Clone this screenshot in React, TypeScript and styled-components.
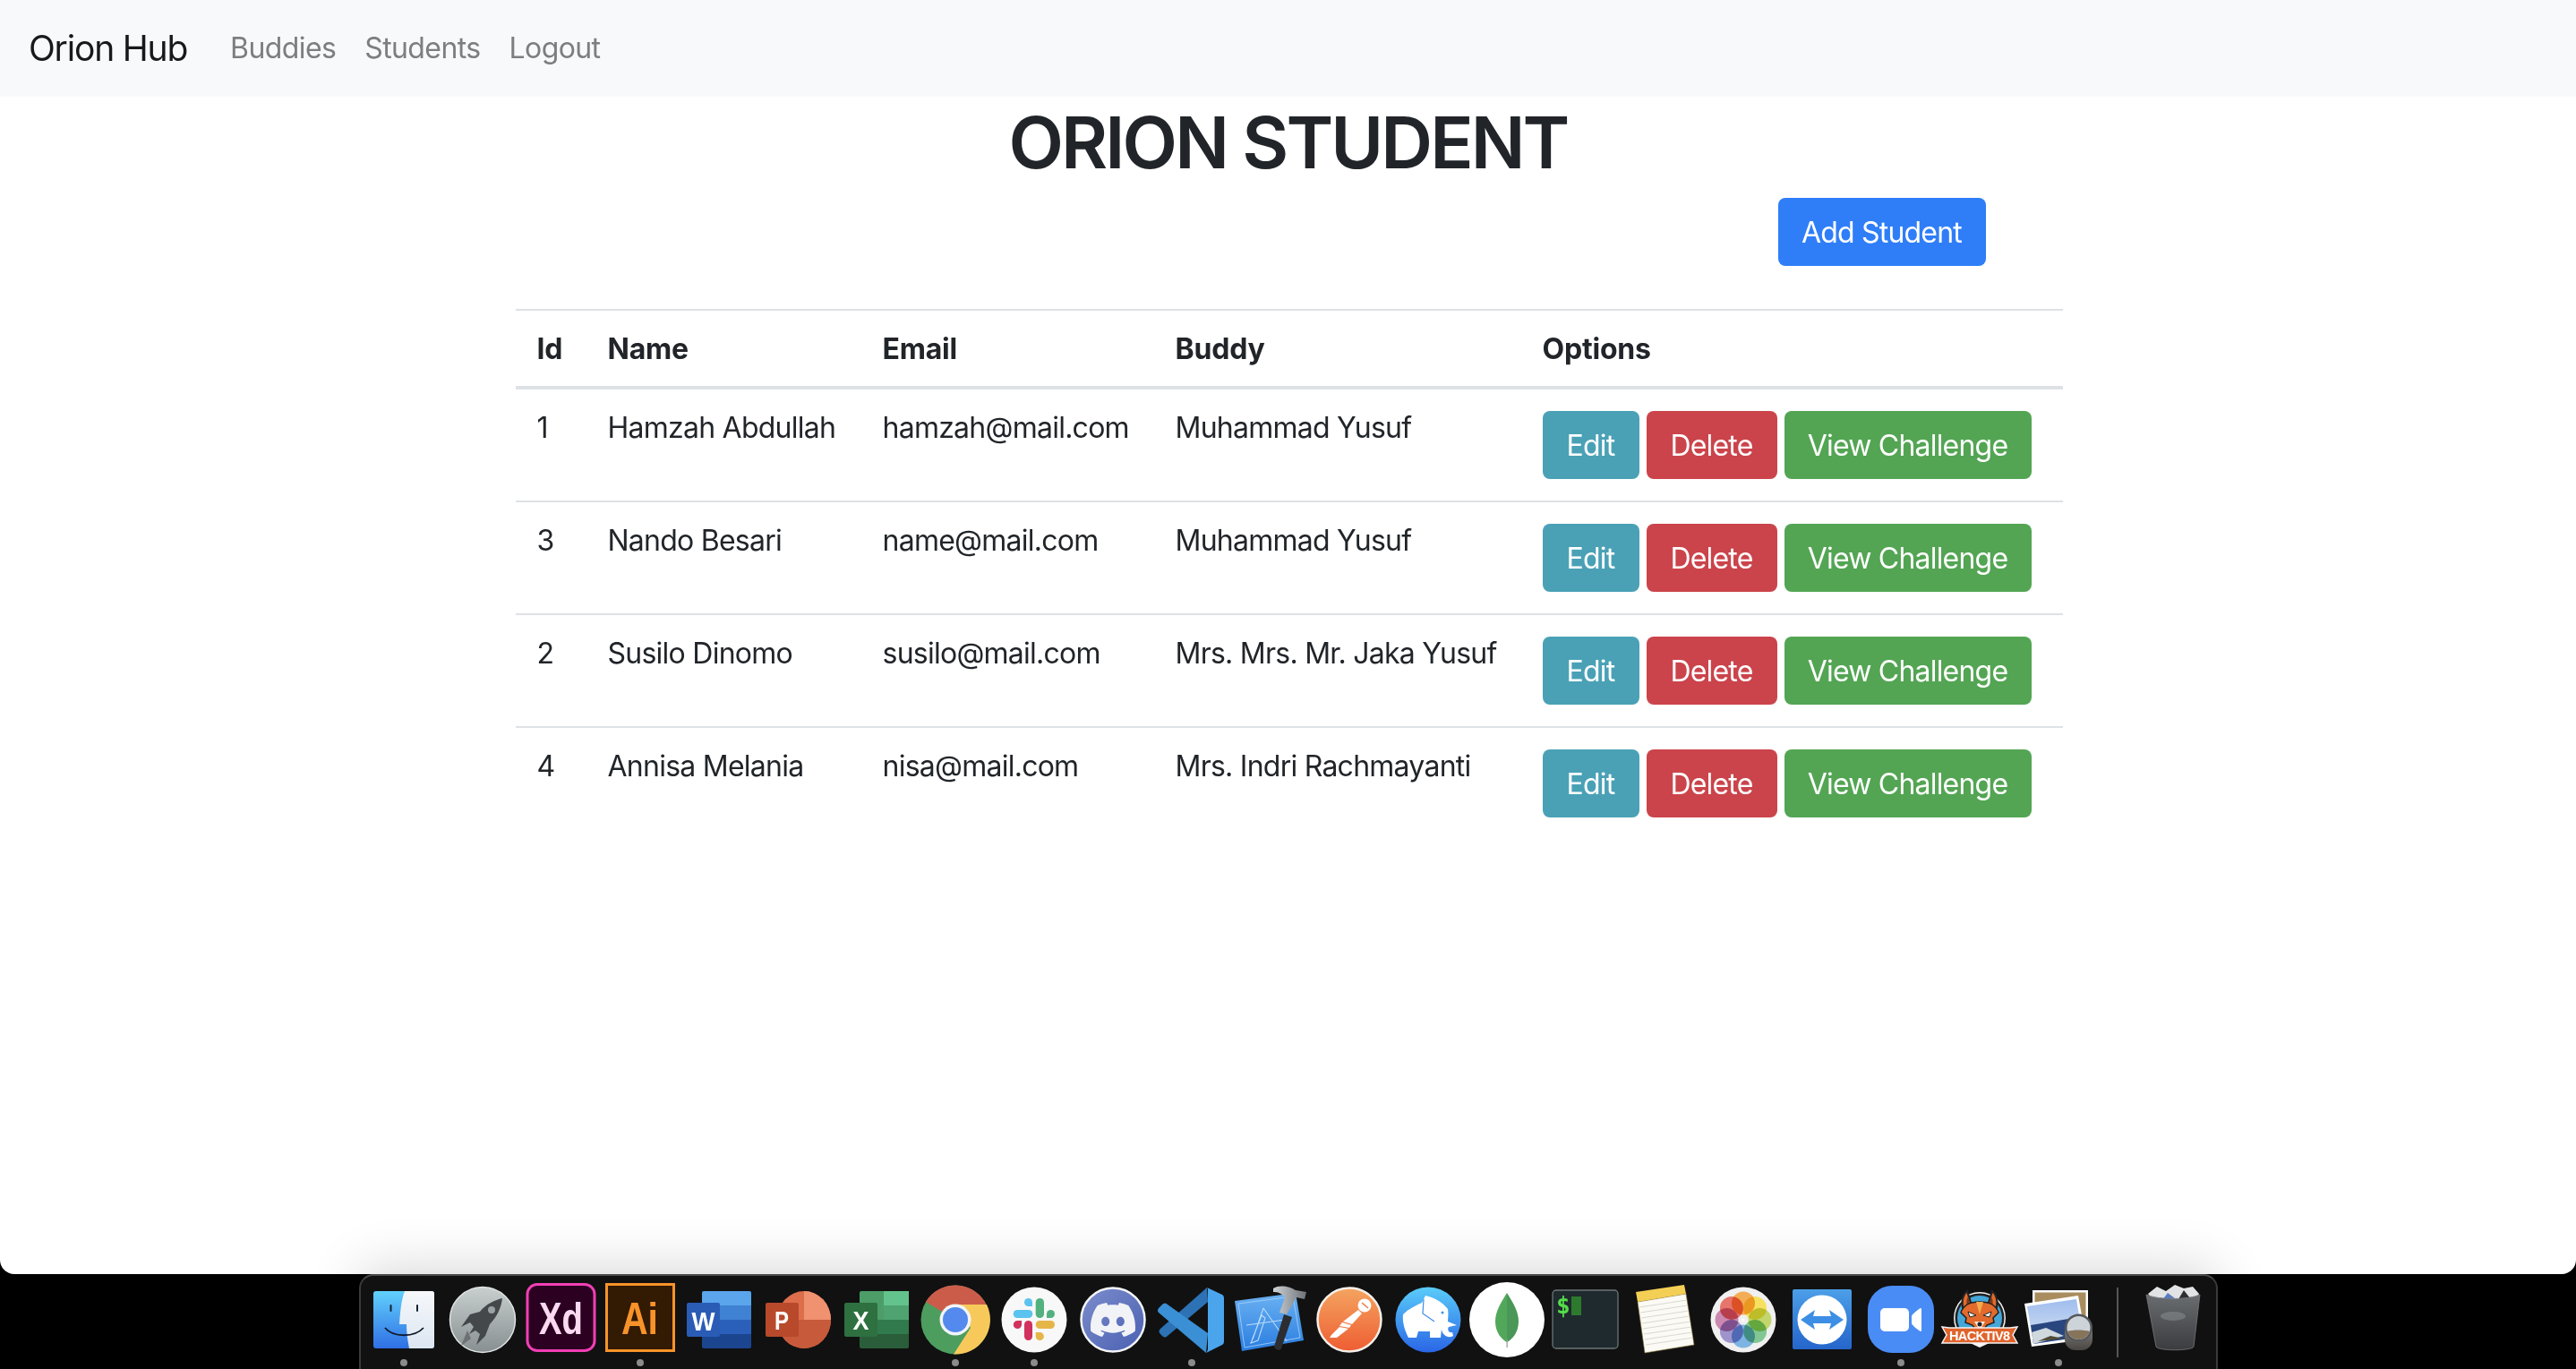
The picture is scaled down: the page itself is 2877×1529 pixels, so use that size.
import React from "react";
import styled, { createGlobalStyle } from "styled-components";
import { SiDiscord } from "react-icons/si";

const GlobalStyle = createGlobalStyle`
  html, body {
    margin: 0;
    height: 1529px;
    overflow: hidden;
    background: #000;
    font-family: Inter, "Liberation Sans", sans-serif;
    color: #212529;
  }
  * { box-sizing: border-box; }
`;

const Screen = styled.div`
  display: flex;
  flex-direction: column;
  align-items: center;
  height: 1529px;
`;

const Page = styled.div`
  width: 100%;
  height: 1423px;
  background: #fff;
  border-radius: 0 0 16px 16px;
`;

const Navbar = styled.nav`
  display: flex;
  align-items: center;
  height: 108px;
  padding: 0 32px;
  background: #f8f9fa;
`;

const Brand = styled.a`
  font-size: 39px;
  line-height: 60px;
  letter-spacing: -1.2px;
  color: #18191a;
  margin-right: 32px;
`;

const NavLink = styled.a`
  font-size: 32px;
  line-height: 48px;
  padding: 0 16px;
  letter-spacing: -0.6px;
  color: #7d7e7f;
`;

const Title = styled.h1`
  margin: 3px 0 0;
  text-align: center;
  font-size: 80px;
  line-height: 96px;
  font-weight: 560;
  letter-spacing: -2.9px;
`;

const Content = styled.div`
  width: 1730px;
  margin: 0 auto;
  padding-left: 2px;
`;

const AddRow = styled.div`
  display: flex;
  justify-content: flex-end;
  margin-top: 14px;
  padding-right: 86px;
`;

const Button = styled.button<{ $bg: string; $w: number }>`
  width: ${(p) => p.$w}px;
  height: 76px;
  padding: 0;
  border: 0;
  border-radius: 8px;
  background: ${(p) => p.$bg};
  color: #fff;
  font-family: inherit;
  font-size: 32px;
  letter-spacing: -0.8px;
  white-space: nowrap;
  flex: none;
`;

const Table = styled.table`
  width: 100%;
  margin-top: 48px;
  border-collapse: collapse;
  table-layout: fixed;
`;

const Col = styled.col<{ $w: number }>`
  width: ${(p) => p.$w}px;
`;

const Th = styled.th`
  padding: 25px 24px 23px;
  text-align: left;
  font-size: 32px;
  line-height: 36px;
  font-weight: 700;
  letter-spacing: -0.2px;
  border-top: 2px solid #dee2e6;
  border-bottom: 4px solid #dee2e6;
`;

const Td = styled.td`
  padding: 25px 24px 23px;
  vertical-align: top;
  font-size: 32px;
  line-height: 36px;
  letter-spacing: -0.75px;
  white-space: nowrap;
`;

const ActionCell = styled(Td)`
  padding: 24px;
`;

const Row = styled.tr`
  & + & {
    border-top: 2px solid #dee2e6;
  }
`;

const Actions = styled.div`
  display: flex;
  gap: 8px;
`;

const Dock = styled.div`
  position: relative;
  display: flex;
  width: 2076px;
  height: 106px;
  padding: 5px 4px 0;
  background: #111;
  border: 2px solid #3a3a3a;
  border-bottom: 0;
  border-top-color: #4a4a4a;
  border-radius: 16px 16px 0 0;
  box-shadow: 0 -6px 60px rgba(0, 0, 0, 0.16);
`;

const Slot = styled.div`
  width: 88px;
  height: 100px;
  display: flex;
  flex-direction: column;
  align-items: center;
  flex: none;
`;

const Glyph = styled.svg`
  display: block;
  width: 88px;
  height: 88px;
  flex: none;
`;

const Dot = styled.span<{ $on: boolean }>`
  width: 8px;
  height: 8px;
  border-radius: 50%;
  background: ${(p) => (p.$on ? "#8b8b8b" : "transparent")};
`;

const Divider = styled.div`
  width: 2px;
  height: 78px;
  margin: 8px 17px 0 21px;
  background: #555;
  flex: none;
`;

const Petal = styled.circle`
  mix-blend-mode: multiply;
`;

const IconText = styled.text<{ $family?: string }>`
  font-family: ${(p) => p.$family || '"Liberation Sans", sans-serif'};
`;

const students = [
  { id: 1, name: "Hamzah Abdullah", email: "hamzah@mail.com", buddy: "Muhammad Yusuf" },
  { id: 3, name: "Nando Besari", email: "name@mail.com", buddy: "Muhammad Yusuf" },
  { id: 2, name: "Susilo Dinomo", email: "susilo@mail.com", buddy: "Mrs. Mrs. Mr. Jaka Yusuf" },
  { id: 4, name: "Annisa Melania", email: "nisa@mail.com", buddy: "Mrs. Indri Rachmayanti" },
];

const Gradient = ({ id, from, to }: { id: string; from: string; to: string }) => (
  <linearGradient id={id} x1="0" y1="0" x2="0" y2="1">
    <stop offset="0" stopColor={from} />
    <stop offset="1" stopColor={to} />
  </linearGradient>
);

const Finder = () => (
  <>
    <defs>
      <Gradient id="fl" from="#62d0fc" to="#2f6fe4" />
      <Gradient id="fr" from="#f6f8fa" to="#dce6f2" />
    </defs>
    <rect x="10" y="12" width="68" height="64" rx="3" fill="url(#fl)" />
    <path d="M45 12H75a3 3 0 0 1 3 3V73a3 3 0 0 1-3 3H50C48 66 47 58 47 49H39C40 36 41 22 45 12Z" fill="url(#fr)" />
    <rect x="28.5" y="27" width="2" height="8" rx="1" fill="#123" />
    <rect x="58" y="27" width="2" height="8" rx="1" fill="#123" />
    <path d="M23 53C32 64 56 64 66 53" fill="none" stroke="#111a2a" strokeWidth="1.8" />
  </>
);

const Launchpad = () => (
  <>
    <defs>
      <Gradient id="lp" from="#c9cfcf" to="#878f90" />
    </defs>
    <circle cx="44" cy="44" r="36.5" fill="url(#lp)" stroke="#dfe4e4" strokeWidth="1.5" />
    <path d="M66 20C58 22 48 26 41 35L30 38L20 52L30 47L34 52L29 60L36 56L41 60L37 72L47 62L52 49C60 41 65 30 66 20Z" fill="#45484a" />
    <circle cx="54" cy="33" r="4" fill="#9ba2a3" />
    <path d="M27 56L20 73L31 65Z" fill="#6d7173" />
  </>
);

const Xd = () => (
  <>
    <rect x="6" y="4.5" width="75" height="74" rx="11" fill="#2b0021" stroke="#f23fb5" strokeWidth="3" />
    <IconText x="19" y="60" fontSize="50" fontWeight="700" textLength="49" lengthAdjust="spacingAndGlyphs" fill="#fbd9f1">Xd</IconText>
  </>
);

const Ai = () => (
  <>
    <rect x="6.5" y="4.5" width="75" height="74" fill="#331a02" stroke="#f7932a" strokeWidth="3" />
    <IconText x="23" y="60" fontSize="50" fontWeight="700" textLength="41" lengthAdjust="spacingAndGlyphs" fill="#f7932a">Ai</IconText>
  </>
);

const OfficeBack = ({ c }: { c: string[] }) => (
  <>
    <path d="M27 12H78a2 2 0 0 1 2 2V28H25V14a2 2 0 0 1 2-2Z" fill={c[0]} />
    <rect x="25" y="28" width="55" height="16" fill={c[1]} />
    <rect x="25" y="44" width="55" height="16" fill={c[2]} />
    <path d="M25 60H80V74a2 2 0 0 1-2 2H27a2 2 0 0 1-2-2Z" fill={c[3]} />
  </>
);

const Word = () => (
  <>
    <OfficeBack c={["#5aa5ec", "#3f81d2", "#2a60ba", "#1c4590"]} />
    <rect x="8" y="25" width="37" height="38" rx="2" fill="#2a5cb6" />
    <IconText x="13.5" y="55.5" fontSize="30" fontWeight="700" textLength="26" lengthAdjust="spacingAndGlyphs" fill="#fff">W</IconText>
  </>
);

const Powerpoint = () => (
  <>
    <ellipse cx="51" cy="44" rx="30" ry="32" fill="#dd6e4c" />
    <path d="M51 12A30 32 0 0 1 81 44H51Z" fill="#f0916f" />
    <path d="M81 44A30 32 0 0 1 21 44Z" fill="#c65a3a" />
    <rect x="8" y="25" width="37" height="38" rx="2" fill="#b84a2b" />
    <IconText x="18" y="55" fontSize="29" fontWeight="700" textLength="16" lengthAdjust="spacingAndGlyphs" fill="#fff">P</IconText>
  </>
);

const Excel = () => (
  <>
    <OfficeBack c={["#4c9d68", "#4c9d68", "#307a4d", "#2a5d3a"]} />
    <rect x="52" y="12" width="28" height="16" fill="#63c38c" />
    <rect x="52" y="28" width="28" height="16" fill="#4fa370" />
    <rect x="8" y="25" width="37" height="38" rx="2" fill="#2f7040" />
    <IconText x="17.5" y="55" fontSize="29" fontWeight="700" textLength="18" lengthAdjust="spacingAndGlyphs" fill="#fff">X</IconText>
  </>
);

const Chrome = () => (
  <>
    <circle cx="44" cy="44" r="38.5" fill="#4d9d5f" />
    <path d="M44 44L11 24A38.5 38.5 0 0 1 79 28H44Z" fill="#cc5c4a" />
    <path d="M44 27H79A38.5 38.5 0 0 1 42 82.4L61 53Z" fill="#f7c95b" />
    <circle cx="44" cy="44" r="17.5" fill="#f2f5f8" />
    <circle cx="44" cy="44" r="14" fill="#5489ee" />
  </>
);

const Slack = () => (
  <>
    <circle cx="44" cy="44" r="36.5" fill="#f8f8f8" />
    <g fill="#5bc3ef">
      <rect x="20.7" y="33" width="21.6" height="9" rx="4.5" />
      <path d="M33 24.5a4.5 4.5 0 0 1 9 0V29H37.5a4.5 4.5 0 0 1-4.5-4.5Z" />
    </g>
    <g fill="#52b27f">
      <rect x="45.7" y="20" width="9.3" height="22" rx="4.6" />
      <path d="M58 37.5a4.5 4.5 0 1 1 4.5 4.5H58Z" />
    </g>
    <g fill="#e5b548">
      <rect x="45.7" y="45" width="21.3" height="9" rx="4.5" />
      <path d="M45.7 58H50.4a4.6 4.5 0 1 1-4.7 4.5Z" />
    </g>
    <g fill="#d1315c">
      <rect x="33" y="45" width="9" height="22" rx="4.5" />
      <path d="M30 49.5a4.6 4.5 0 1 1-4.6-4.5H30Z" />
    </g>
  </>
);

const Discord = () => (
  <>
    <defs>
      <linearGradient id="dc" x1="0" y1="0" x2="1" y2="1">
        <stop offset="0" stopColor="#7c8dcc" />
        <stop offset="1" stopColor="#4a60b2" />
      </linearGradient>
    </defs>
    <circle cx="44" cy="44" r="35.5" fill="url(#dc)" stroke="#f4f5f8" strokeWidth="2.5" />
    <SiDiscord x="19" y="19" size={50} color="#f2f3f7" />
  </>
);

const VSCode = () => (
  <>
    <path d="M61 8L62 24L17 62C15 64 13 64 11 62L9 60C7 58 7 56 9 54Z" fill="#2c72b4" />
    <path d="M7 36C5 34 6 32 8 30L11 27C13 25 15 25 17 27L62 59L60 81Z" fill="#3a8fd5" />
    <path d="M61 8L78 16C79.5 17 80 18 80 20V68C80 70 79.5 71 78 72L60 81C61 80 62 78 62 76V12C62 10 62 9 61 8Z" fill="#4aa5ec" />
  </>
);

const Xcode = () => (
  <>
    <defs>
      <linearGradient id="xc" x1="0" y1="0" x2="0" y2="1">
        <stop offset="0" stopColor="#6bb2f2" />
        <stop offset="1" stopColor="#2a7de0" />
      </linearGradient>
      <linearGradient id="xh" x1="0" y1="0" x2="1" y2="0">
        <stop offset="0" stopColor="#cfd3d6" />
        <stop offset="1" stopColor="#6e7276" />
      </linearGradient>
    </defs>
    <path d="M4 23L72 14L81 67L12 79Z" fill="url(#xc)" />
    <path d="M8 26L69 18L77 64L15 75Z" fill="none" stroke="#a9d3fa" strokeWidth="0.8" />
    <g fill="none" stroke="#bcdcfb" strokeWidth="1.1">
      <path d="M36 31L62 68M36 31L24 66M17 50L60 44M30 67L38 42L34 39L22 70Z" />
    </g>
    <path d="M47 9C54 4 66 7 72 11L84 13L82 21L73 19L71 22L62 38L54 36L60 19C56 14 52 13 47 13Z" fill="url(#xh)" />
    <path d="M59 38L68 41L56 76C55 79 49 78 48 74Z" fill="#2b2d30" />
  </>
);

const Postman = () => (
  <>
    <defs>
      <Gradient id="pm" from="#f4a460" to="#ee5d33" />
    </defs>
    <circle cx="44" cy="44" r="35.5" fill="url(#pm)" stroke="#f5efe9" strokeWidth="2.5" />
    <circle cx="61" cy="28" r="7.5" fill="#fff" />
    <path d="M58 25L65 31" stroke="#ee7b46" strokeWidth="1.5" />
    <path d="M54 33L58 37L47 49L37 46Z" fill="#fff" />
    <path d="M36 47L46 50L44 53L33 51Z" fill="#fff" />
    <path d="M33 52L43 54L30 64H22L24 61Z" fill="#fff" />
  </>
);

const Elephant = () => (
  <>
    <defs>
      <Gradient id="el" from="#5accf9" to="#2a66e6" />
    </defs>
    <circle cx="44" cy="44" r="36.5" fill="url(#el)" />
    <path d="M16 38C22 32 30 28 37 25L41 17C50 19 60 24 66 32C67 38 66 42 66 46L76 50L67 52C65 55 67 59 71 58L72 62C66 66 59 60 59 54L58 64H46V57H33L31 64H22C18 56 15 47 16 38Z" fill="#fff" />
    <path d="M39 21L38 37L51 46" fill="none" stroke="#3f8fe9" strokeWidth="1.2" />
    <circle cx="60" cy="36" r="1.5" fill="#3a94ea" />
  </>
);

const Mongo = () => (
  <>
    <circle cx="44" cy="44" r="42" fill="#fff" />
    <path d="M44 14C38 24 31 34 31 46C31 58 38 66 44 69Z" fill="#52a85a" />
    <path d="M44 14C50 24 57 34 57 46C57 58 50 66 44 69Z" fill="#4a9758" />
    <rect x="43.5" y="66" width="1.3" height="9" fill="#9aa39b" />
  </>
);

const Terminal = () => (
  <>
    <rect x="7" y="11" width="73" height="65" rx="4" fill="#1f2a2e" stroke="#6d7578" strokeWidth="1.3" />
    <IconText $family='"DejaVu Sans Mono", monospace' x="11" y="37" fontSize="26" fontWeight="700" fill="#54dd4a">$</IconText>
    <rect x="28" y="18" width="11" height="21" fill="#2d7a2e" />
  </>
);

const Notes = () => (
  <>
    <path d="M14 24L68 15L77 72L22 81Z" fill="#fbfaf4" stroke="#8d7a3c" strokeWidth="0.6" />
    <path d="M12 13L66 5L68 15L14 24Z" fill="#f4cf55" />
    <g stroke="#cfcfcb" strokeWidth="0.8">
      <path d="M16 30L69 22M17 36L70 28M18 42L71 34M19 48L72 40M20 54L73 46M21 60L74 52M22 66L75 58M23 72L76 64" />
    </g>
  </>
);

const Photos = () => (
  <>
    <circle cx="44" cy="44" r="36.5" fill="#f0f0f0" />
    <g style={{ isolation: "isolate" }}>
      {["#f3ad55", "#f7e05f", "#c3d66c", "#82c793", "#7db4e3", "#a094cc", "#cb89b2", "#e6756c"].map((c, i) => (
        <Petal key={c} cx="44" cy="25.5" r="13" fill={c} transform={`rotate(${i * 45} 44 44)`} />
      ))}
    </g>
    <circle cx="44" cy="44" r="1.5" fill="#fff" />
  </>
);

const TeamViewer = () => (
  <>
    <defs>
      <Gradient id="tv" from="#4c9fe8" to="#2565cb" />
    </defs>
    <rect x="11" y="10" width="66" height="67" rx="2" fill="url(#tv)" />
    <circle cx="44" cy="44" r="27.5" fill="#fff" />
    <path d="M20 44L36 33L34 40H54L52 33L68 44L52 55L54 48H34L36 55Z" fill="#3c8fe4" />
  </>
);

const Zoom = () => (
  <>
    <rect x="7" y="6" width="74" height="75" rx="27" fill="#4a8cf5" />
    <rect x="21" y="31" width="32" height="26" rx="5" fill="#fff" />
    <path d="M56 40C56 38 64 32 66 31C67 31 67 32 67 33V55C67 56 67 57 66 57C64 56 56 50 56 48Z" fill="#fff" />
  </>
);

const Hacktiv = () => (
  <>
    <circle cx="44" cy="42" r="29" fill="#f4f4f4" />
    <circle cx="44" cy="42" r="27.5" fill="#222" />
    <circle cx="44" cy="42" r="25" fill="#45a7d8" />
    <path d="M30 12C23 18 24 28 26 34L35 28Z M58 12C65 18 64 28 62 34L53 28Z" fill="#e26a2c" stroke="#222" strokeWidth="2.2" />
    <path d="M31 18C29 22 29 26 30 29L33 26Z M57 18C59 22 59 26 58 29L55 26Z" fill="#7a3a1b" />
    <path d="M23 36C26 26 36 24 44 24C52 24 62 26 65 36L59 42L60 47L52 50L48 56H40L36 50L28 47L29 42Z" fill="#e26a2c" stroke="#222" strokeWidth="1.5" />
    <path d="M40 24L44 38L48 24Z" fill="#f5a94d" />
    <path d="M31 35L40 39L33 41Z M57 35L48 39L55 41Z" fill="#fff" stroke="#222" strokeWidth="1" />
    <path d="M38 46H50L44 56Z" fill="#f6e9dd" />
    <circle cx="44" cy="49" r="2.5" fill="#222" />
    <path d="M44 75L29 68H59Z" fill="#f4f4f4" />
    <path d="M2 52L10 53H78L86 52L81 61L86 70H2L7 61Z" fill="#e0642c" stroke="#f4f4f4" strokeWidth="1.5" />
    <IconText x="10" y="66.5" fontSize="14.5" fontWeight="700" textLength="68" lengthAdjust="spacing" fill="#fff">HACKTIV8</IconText>
  </>
);

const Preview = () => (
  <>
    <defs>
      <Gradient id="ps" from="#9fbdee" to="#d9e3f2" />
      <Gradient id="pl" from="#8b8b8b" to="#4a4642" />
    </defs>
    <rect x="15" y="11" width="62" height="52" fill="#fff" />
    <rect x="17.5" y="13.5" width="57" height="47" fill="#a98d5f" />
    <path d="M6 26L66 17L75 66L14 74Z" fill="#fff" />
    <path d="M9 29L64 21L71 63L16 71Z" fill="url(#ps)" />
    <path d="M13 50L67 41L71 63L16 71Z" fill="#29467f" />
    <path d="M14 58L30 53L50 62L16 71Z" fill="#cfd8dd" />
    <path d="M21 68L35 62L50 65Z" fill="#4f4a36" />
    <rect x="51" y="46" width="31" height="32" rx="12" fill="url(#pl)" />
    <circle cx="66.5" cy="53" r="15.5" fill="#55585b" />
    <circle cx="66.5" cy="53" r="13" fill="#ccd3d9" />
    <path d="M54 57C60 55 72 55 79 57C77 62 72 66 66.5 66C61 66 56 62 54 57Z" fill="#86745a" />
  </>
);

const Trash = () => (
  <>
    <defs>
      <Gradient id="tr" from="#6a6d70" to="#3a3c3f" />
    </defs>
    <path d="M16 15L26 7L36 12L46 5L56 9L66 7L73 15L66 26H24Z" fill="#e1e3e4" />
    <path d="M38 14L46 20L32 22Z" fill="#5a7bc0" />
    <path d="M56 11L63 20L50 21Z" fill="#2d2f33" />
    <path d="M14 16C28 22 60 22 74 16L67 74C65 79 27 79 25 74Z" fill="url(#tr)" stroke="#77797c" strokeWidth="0.8" />
    <ellipse cx="44" cy="40" rx="14" ry="5" fill="#8e9194" opacity="0.5" />
  </>
);

const dockApps: { key: string; Icon: () => React.ReactElement; running?: boolean }[] = [
  { key: "finder", Icon: Finder, running: true },
  { key: "launchpad", Icon: Launchpad },
  { key: "xd", Icon: Xd },
  { key: "ai", Icon: Ai, running: true },
  { key: "word", Icon: Word },
  { key: "powerpoint", Icon: Powerpoint },
  { key: "excel", Icon: Excel },
  { key: "chrome", Icon: Chrome, running: true },
  { key: "slack", Icon: Slack, running: true },
  { key: "discord", Icon: Discord },
  { key: "vscode", Icon: VSCode, running: true },
  { key: "xcode", Icon: Xcode },
  { key: "postman", Icon: Postman },
  { key: "elephant", Icon: Elephant },
  { key: "mongo", Icon: Mongo },
  { key: "terminal", Icon: Terminal },
  { key: "notes", Icon: Notes },
  { key: "photos", Icon: Photos },
  { key: "teamviewer", Icon: TeamViewer },
  { key: "zoom", Icon: Zoom, running: true },
  { key: "hacktiv", Icon: Hacktiv },
  { key: "preview", Icon: Preview, running: true },
];

function DockSlot({ Icon, running }: { Icon: () => React.ReactElement; running?: boolean }) {
  return (
    <Slot>
      <Glyph viewBox="0 0 88 88">
        <Icon />
      </Glyph>
      <Dot $on={!!running} />
    </Slot>
  );
}

function App() {
  return (
    <Screen>
      <GlobalStyle />
      <Page>
        <Navbar>
          <Brand>Orion Hub</Brand>
          <NavLink>Buddies</NavLink>
          <NavLink>Students</NavLink>
          <NavLink>Logout</NavLink>
        </Navbar>
        <Title>ORION STUDENT</Title>
        <Content>
          <AddRow>
            <Button $bg="#2f7ef8" $w={232}>Add Student</Button>
          </AddRow>
          <Table>
            <colgroup>
              <Col $w={79} />
              <Col $w={307} />
              <Col $w={327} />
              <Col $w={410} />
              <Col $w={605} />
            </colgroup>
            <thead>
              <tr>
                <Th>Id</Th>
                <Th>Name</Th>
                <Th>Email</Th>
                <Th>Buddy</Th>
                <Th>Options</Th>
              </tr>
            </thead>
            <tbody>
              {students.map((s) => (
                <Row key={s.id}>
                  <Td>{s.id}</Td>
                  <Td>{s.name}</Td>
                  <Td>{s.email}</Td>
                  <Td>{s.buddy}</Td>
                  <ActionCell>
                    <Actions>
                      <Button $bg="#4aa1b6" $w={108}>Edit</Button>
                      <Button $bg="#cb444b" $w={146}>Delete</Button>
                      <Button $bg="#53a553" $w={276}>View Challenge</Button>
                    </Actions>
                  </ActionCell>
                </Row>
              ))}
            </tbody>
          </Table>
        </Content>
      </Page>
      <Dock>
        {dockApps.map((a) => (
          <DockSlot key={a.key} Icon={a.Icon} running={a.running} />
        ))}
        <Divider />
        <DockSlot Icon={Trash} />
      </Dock>
    </Screen>
  );
}

export default App;
